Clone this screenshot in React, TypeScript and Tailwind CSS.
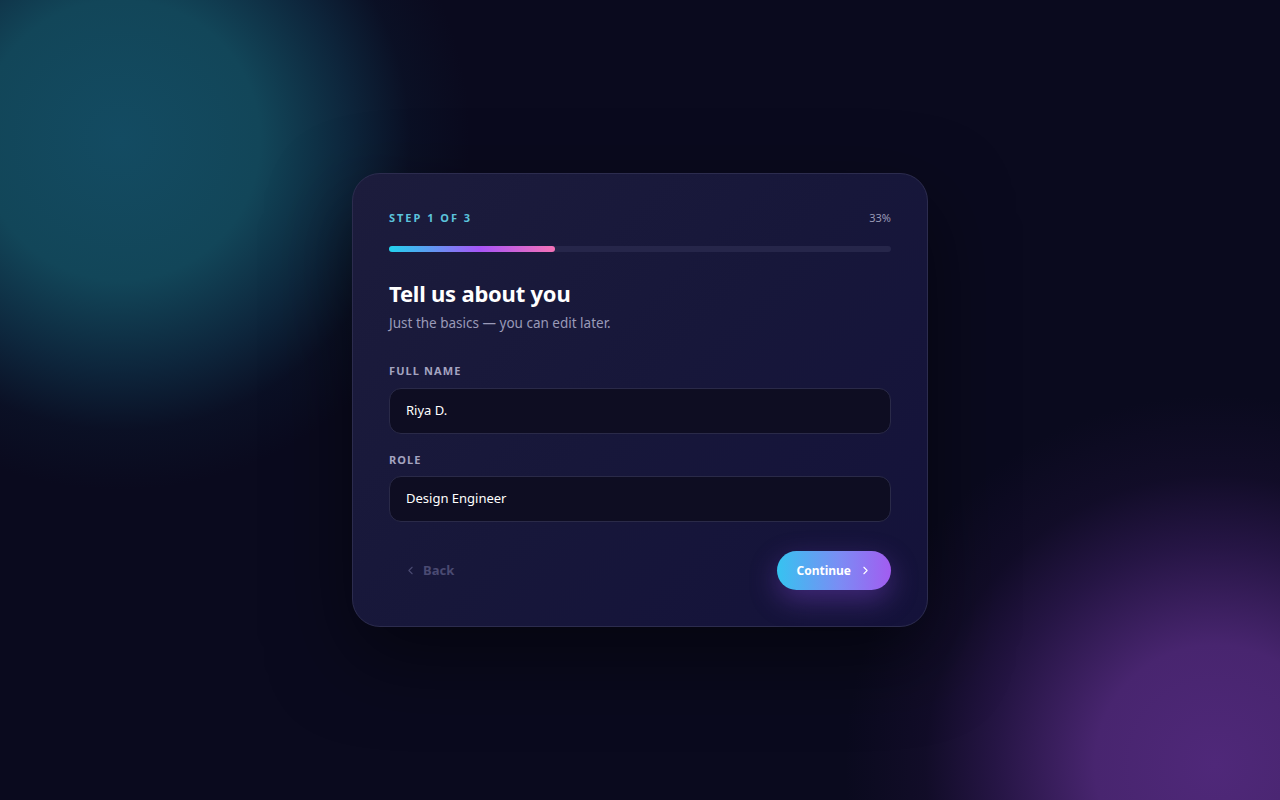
import { ChevronLeft, ChevronRight } from "lucide-react";

const fields = [
  { label: "FULL NAME", value: "Riya D." },
  { label: "ROLE", value: "Design Engineer" },
];

export default function App() {
  const progress = 33;

  return (
    <div className="min-h-screen w-full flex items-center justify-center font-['Noto_Sans','Liberation_Sans',sans-serif] [background:radial-gradient(circle_at_120px_140px,#134b62_0px,#124659_140px,rgba(16,60,84,0.55)_230px,rgba(12,40,64,0.2)_290px,transparent_350px),radial-gradient(circle_at_1215px_765px,#4f2879_0px,#48256f_120px,rgba(60,30,100,0.55)_220px,rgba(40,20,70,0.25)_290px,transparent_370px),#0a0a1e]">
      <div className="w-[576px] rounded-[28px] border border-[#2c2c4e] bg-[linear-gradient(135deg,#1c1c3c_0%,#17173a_50%,#14123a_100%)] px-[36px] pt-[36px] pb-[36px] shadow-[0_30px_80px_rgba(0,0,0,0.5)]">
        {/* ステップ表示 */}
        <div className="flex items-center justify-between">
          <span className="text-[11px] font-bold tracking-[0.18em] text-[#5cc4dc]">STEP 1 OF 3</span>
          <span className="text-[11px] text-[#9a9ab6]">{progress}%</span>
        </div>

        {/* 進捗バー */}
        <div className="mt-[20px] h-[6px] w-full rounded-full bg-[#26264a]">
          <div
            className="h-full rounded-full bg-[linear-gradient(90deg,#22d3ee_0%,#a855f7_55%,#f472b6_100%)]"
            style={{ width: `${progress}%` }}
          />
        </div>

        <h1 className="mt-[28px] text-[22px] font-bold leading-tight tracking-[-0.01em] text-white">Tell us about you</h1>
        <p className="mt-[5px] text-[13.5px] text-[#9a9ab8]">Just the basics — you can edit later.</p>

        <div className="mt-[30px] flex flex-col gap-[18px]">
          {fields.map((f) => (
            <div key={f.label}>
              <label className="block text-[11px] font-bold tracking-[0.1em] text-[#a4a4c0]">{f.label}</label>
              <div className="mt-[8px] flex h-[46px] items-center rounded-[12px] border border-[#2a2a48] bg-[#0e0d22] px-[16px] text-[13px] text-white">
                {f.value}
              </div>
            </div>
          ))}
        </div>

        {/* ナビゲーション */}
        <div className="mt-[29px] flex items-center justify-between">
          <button className="flex items-center gap-[6px] pl-[15px] text-[13px] font-bold text-[#4a4a72]">
            <ChevronLeft size={13} strokeWidth={2} />
            Back
          </button>
          <button className="flex h-[39px] items-center gap-[8px] rounded-full bg-[linear-gradient(90deg,#36c3f0_0%,#7b8cf4_55%,#a25cf0_100%)] px-[19px] text-[12px] font-bold text-white shadow-[0_10px_28px_rgba(150,80,240,0.35)]">
            Continue
            <ChevronRight size={13} strokeWidth={2} />
          </button>
        </div>
      </div>
    </div>
  );
}
